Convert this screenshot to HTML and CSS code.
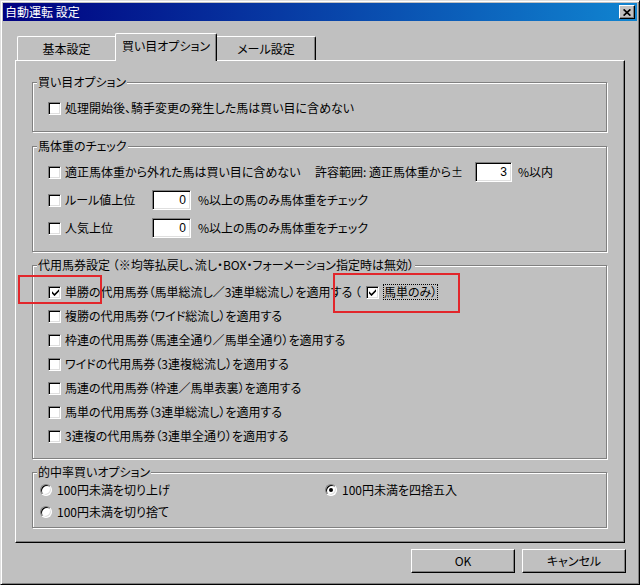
FILE: index.html
```html
<!DOCTYPE html>
<html lang="ja">
<head>
<meta charset="utf-8">
<title>自動運転 設定</title>
<link rel="stylesheet" href="styles.css">
</head>
<body>
<div class="window">
  <div class="titlebar">
    <span class="title">自動運転 設定</span>
    <span class="close"><svg width="8" height="7" viewBox="0 0 8 7"><path d="M0.6 0.4 L7.4 6.6 M7.4 0.4 L0.6 6.6" stroke="#000" stroke-width="1.7" fill="none"/></svg></span>
  </div>
  <div class="client">
    <div class="tabs">
      <div class="tab tab-first">基本設定</div>
      <div class="tab tab-active">買い目オプション</div>
      <div class="tab tab-last">メール設定</div>
    </div>
    <div class="panel">
      <div class="group g1">
        <div class="legend">買い目オプション</div>
        <div class="rows">
          <div class="row"><span class="cb"></span><span class="lbl">処理開始後、騎手変更の発生した馬は買い目に含めない</span></div>
        </div>
      </div>

      <div class="group g2">
        <div class="legend">馬体重のチェック</div>
        <div class="rows">
          <div class="row tall"><span class="cb"></span><span class="lbl w250">適正馬体重から外れた馬は買い目に含めない</span><span class="lbl w160">許容範囲: 適正馬体重から±</span><span class="field f37">3</span><span class="lbl after6">%以内</span></div>
          <div class="row tall"><span class="cb"></span><span class="lbl w87">ルール値上位</span><span class="field">0</span><span class="lbl after7">%以上の馬のみ馬体重をチェック</span></div>
          <div class="row tall"><span class="cb"></span><span class="lbl w87">人気上位</span><span class="field">0</span><span class="lbl after7">%以上の馬のみ馬体重をチェック</span></div>
        </div>
      </div>

      <div class="group g3">
        <div class="legend">代用馬券設定 （※均等払戻し、流し・BOX・フォーメーション指定時は無効）</div>
        <div class="rows">
          <div class="row"><span class="cb checked"><svg width="7" height="7" viewBox="0 0 7 7"><path d="M0 2.3 L2.5 4.8 L7 0.3 L7 2.6 L2.5 7.1 L0 4.6 Z" fill="#000"/></svg></span><span class="lbl">単勝の代用馬券（馬単総流し／3連単総流し）を適用する （</span><span class="cb checked inline"><svg width="7" height="7" viewBox="0 0 7 7"><path d="M0 2.3 L2.5 4.8 L7 0.3 L7 2.6 L2.5 7.1 L0 4.6 Z" fill="#000"/></svg></span><span class="lbl focus">馬単のみ）</span></div>
          <div class="row"><span class="cb"></span><span class="lbl">複勝の代用馬券（ワイド総流し）を適用する</span></div>
          <div class="row"><span class="cb"></span><span class="lbl">枠連の代用馬券（馬連全通り／馬単全通り）を適用する</span></div>
          <div class="row"><span class="cb"></span><span class="lbl">ワイドの代用馬券（3連複総流し）を適用する</span></div>
          <div class="row"><span class="cb"></span><span class="lbl">馬連の代用馬券（枠連／馬単表裏）を適用する</span></div>
          <div class="row"><span class="cb"></span><span class="lbl">馬単の代用馬券（3連単総流し）を適用する</span></div>
          <div class="row"><span class="cb"></span><span class="lbl">3連複の代用馬券（3連単全通り）を適用する</span></div>
        </div>
      </div>

      <div class="group g4">
        <div class="legend">的中率買いオプション</div>
        <div class="radios">
          <div class="row short"><span class="rb"></span><span class="lbl">100円未満を切り上げ</span></div>
          <div class="row short"><span class="rb on"></span><span class="lbl">100円未満を四捨五入</span></div>
          <div class="row short"><span class="rb"></span><span class="lbl">100円未満を切り捨て</span></div>
        </div>
      </div>
    </div>
    <div class="buttons">
      <div class="btn">OK</div>
      <div class="btn">キャンセル</div>
    </div>
  </div>
  <div class="mark mark1"></div>
  <div class="mark mark2"></div>
</div>
</body>
</html>
```
FILE: styles.css
```css
html, body {
  margin: 0;
  padding: 0;
  background: #c0c0c0;
}
body {
  font-family: "Noto Sans CJK JP", "Noto Sans", sans-serif;
  font-size: 12px;
  line-height: 14px;
  color: #000;
  font-feature-settings: "palt" 1;
  letter-spacing: 0;
}
.window {
  position: relative;
  width: 640px;
  height: 585px;
  box-sizing: border-box;
  border: 1px solid;
  border-color: #dfdfdf #000 #000 #dfdfdf;
  box-shadow: inset 1px 1px 0 #fff, inset -1px -1px 0 #808080;
  padding: 2px;
  background: #c0c0c0;
}
.titlebar {
  height: 18px;
  display: flex;
  align-items: center;
  justify-content: space-between;
  background: linear-gradient(to right, #000080, #1084d0);
  color: #fff;
  padding: 0 2px 0 2px;
}
.title {
  letter-spacing: 0;
}
.close {
  width: 16px;
  height: 14px;
  box-sizing: border-box;
  background: #c0c0c0;
  border: 1px solid;
  border-color: #fff #000 #000 #fff;
  box-shadow: inset -1px -1px 0 #808080;
  display: flex;
  align-items: center;
  justify-content: center;
}
.client {
  padding: 12px 12px 0 12px;
}
.tabs {
  display: flex;
  align-items: flex-end;
  height: 27px;
  position: relative;
  z-index: 1;
}
.tab {
  box-sizing: border-box;
  height: 24px;
  border-top: 1px solid #fff;
  display: flex;
  align-items: center;
  justify-content: center;
  padding-top: 1px;
  background: #c0c0c0;
}
.tab-first {
  margin-left: 2px;
  width: 98px;
  border-left: 1px solid #fff;
  border-top-left-radius: 2px;
}
.tab-active {
  width: 102px;
  height: 28px;
  margin-bottom: -1px;
  padding-top: 0;
  padding-bottom: 4px;
  border-left: 1px solid #fff;
  border-right: 1px solid #000;
  border-radius: 2px 2px 0 0;
  box-shadow: inset -1px 0 0 #808080;
}
.tab-last {
  width: 99px;
  border-right: 1px solid #000;
  border-top-right-radius: 2px;
  box-shadow: inset -1px 0 0 #808080;
}
.panel {
  height: 483px;
  box-sizing: border-box;
  border: 1px solid;
  border-color: #fff #000 #000 #fff;
  box-shadow: inset -1px -1px 0 #808080;
  padding: 21px 17px 0 16px;
}
.group {
  box-sizing: border-box;
  border: 1px solid #808080;
  box-shadow: inset 1px 1px 0 #fff, 1px 1px 0 #fff;
  padding: 0 0 0 15px;
}
.g1 { height: 50px; }
.g2 { height: 106px; margin-top: 14px; }
.g3 { height: 194px; margin-top: 13px; }
.g4 { height: 56px; margin-top: 13px; padding-left: 7px; }
.legend {
  width: max-content;
  height: 14px;
  margin: -8px 0 0 -11px;
  padding: 0 1px;
  background: #c0c0c0;
}
.g4 .legend { margin-left: -3px; }
.g1 .rows { margin-top: 7px; }
.g2 .rows { margin-top: 5px; }
.g3 .rows { margin-top: 8px; }
.row {
  display: flex;
  align-items: center;
  height: 24px;
  white-space: pre;
}
.row.tall { height: 28px; }
.row.short { height: 22px; }
.cb {
  width: 13px;
  height: 13px;
  box-sizing: border-box;
  flex: none;
  background: #fff;
  border: 1px solid;
  border-color: #808080 #fff #fff #808080;
  box-shadow: inset 1px 1px 0 #000, inset -1px -1px 0 #dfdfdf;
  margin-right: 4px;
  display: flex;
  align-items: center;
  justify-content: center;
}
.cb svg { display: block; margin: 1px 0 0 1px; }
.cb.inline { margin-left: 5px; margin-right: 5px; }
.lbl { display: inline-block; }
.w250 { width: 250px; }
.w160 { width: 160px; }
.w87 { width: 87px; }
.after6 { margin-left: 6px; }
.after7 { margin-left: 7px; }
.field {
  width: 39px;
  height: 20px;
  box-sizing: border-box;
  background: #fff;
  border: 1px solid;
  border-color: #808080 #fff #fff #808080;
  box-shadow: inset 1px 1px 0 #000, inset -1px -1px 0 #dfdfdf;
  text-align: right;
  padding: 2px 4px 0 0;
  letter-spacing: 0;
  font-family: "Liberation Sans", sans-serif;
}
.field.f37 { width: 37px; }
.focus {
  outline: 1px dotted #000;
  outline-offset: 0;
}
.radios {
  display: grid;
  grid-template-columns: 285px 1fr;
}
.rb {
  width: 12px;
  height: 12px;
  box-sizing: border-box;
  flex: none;
  border-radius: 50%;
  background: #fff;
  border: 1px solid;
  border-color: #808080 #fff #fff #808080;
  box-shadow: inset 1px 1px 0 #000, inset -1px -1px 0 #dfdfdf;
  margin-right: 5px;
  display: flex;
  align-items: center;
  justify-content: center;
}
.rb.on::after {
  content: "";
  width: 4px;
  height: 4px;
  border-radius: 50%;
  background: #000;
}
.buttons {
  display: flex;
  justify-content: flex-end;
  gap: 7px;
  margin-top: 6px;
  margin-right: -1px;
}
.btn {
  width: 104px;
  height: 24px;
  box-sizing: border-box;
  border: 1px solid;
  border-color: #fff #000 #000 #fff;
  box-shadow: inset -1px -1px 0 #808080;
  display: flex;
  align-items: center;
  justify-content: center;
  letter-spacing: 0;
}
.mark {
  position: absolute;
  box-sizing: border-box;
  border: 2px solid #e2262b;
}
.mark1 { left: 17px; top: 274px; width: 84px; height: 29px; }
.mark2 { left: 332px; top: 272px; width: 127px; height: 40px; }
```
